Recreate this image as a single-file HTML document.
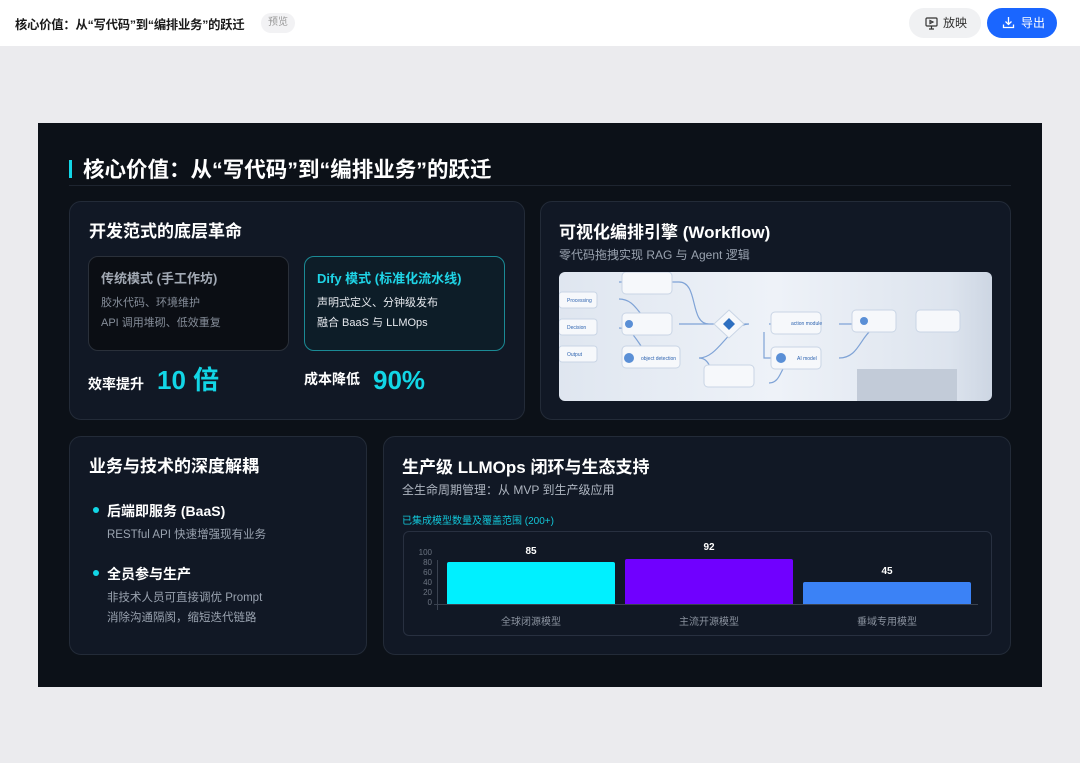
<!DOCTYPE html>
<html><head><meta charset="utf-8"><style>
*{margin:0;padding:0;box-sizing:border-box}
body{width:1080px;height:763px;background:#ebebee;font-family:"Liberation Sans","Noto Sans CJK SC",sans-serif;position:relative;overflow:hidden}
.hdr{position:absolute;left:0;top:0;width:1080px;height:46px;background:#fff}
.a{position:absolute}
.slide{position:absolute;left:38px;top:123px;width:1004px;height:564px;background:#0c1118;overflow:hidden}
.card{position:absolute;background:#111825;border:1px solid #232b38;border-radius:12px}
.t{color:#fff;font-weight:bold}
.g{color:#9aa3b0}
.row{position:absolute;display:flex;align-items:baseline;white-space:nowrap}
</style></head><body>
<div class="hdr">
 <div class="a" style="left:15px;top:15px;font-size:12.3px;font-weight:bold;color:#1a1a1a;letter-spacing:-0.2px">核心价值：从“写代码”到“编排业务”的跃迁</div>
 <div class="a" style="left:261px;top:13px;width:34px;height:20px;border-radius:10px;background:#f2f2f4;color:#999;font-size:10px;text-align:center;line-height:20px">预览</div>
 <div class="a" style="left:909px;top:8px;width:72px;height:30px;border-radius:15px;background:#f0f1f3;font-size:12px;color:#333;line-height:30px;padding-left:34px">放映
  <svg class="a" style="left:16px;top:9px" width="13" height="13" viewBox="0 0 13 13" fill="none" stroke="#333" stroke-width="1.2"><rect x="1" y="1" width="11" height="8" rx="1"/><path d="M5 3.5l3 1.5-3 1.5z M4 12h5 M6.5 9v3"/></svg></div>
 <div class="a" style="left:987px;top:8px;width:70px;height:30px;border-radius:15px;background:#1a66ff;font-size:12px;color:#fff;line-height:30px;padding-left:34px">导出
  <svg class="a" style="left:15px;top:8px" width="13" height="13" viewBox="0 0 13 13" fill="none" stroke="#fff" stroke-width="1.3"><path d="M6.5 1v7 M3.5 5.5l3 3 3-3 M1.5 8.5v3h10v-3"/></svg></div>
</div>
<div class="slide">
 <div class="a" style="left:31px;top:37px;width:3px;height:18px;background:#12d6e6"></div>
 <div class="a t" style="left:45px;top:30px;font-size:21.5px">核心价值：从“写代码”到“编排业务”的跃迁</div>
 <div class="a" style="left:31px;top:62px;width:942px;height:1px;background:#1e2530"></div>

 <div class="card" style="left:31px;top:78px;width:456px;height:219px">
  <div class="a t" style="left:19px;top:15px;font-size:17px">开发范式的底层革命</div>
  <div class="a" style="left:18px;top:54px;width:201px;height:95px;border:1px solid #2a303a;border-radius:10px;background:#0b0e14">
   <div class="a" style="left:12px;top:11px;font-size:13px;font-weight:bold;color:#a3aab5">传统模式 (手工作坊)</div>
   <div class="a g" style="left:12px;top:36px;font-size:11px;line-height:20px;color:#868e9a">胶水代码、环境维护<br>API 调用堆砌、低效重复</div>
  </div>
  <div class="a" style="left:234px;top:54px;width:201px;height:95px;border:1px solid #1b8a95;border-radius:10px;background:#0d1d28">
   <div class="a" style="left:12px;top:11px;font-size:13px;font-weight:bold;color:#1fd4e6">Dify 模式 (标准化流水线)</div>
   <div class="a" style="left:12px;top:36px;font-size:11px;line-height:20px;color:#e6e9ee">声明式定义、分钟级发布<br>融合 BaaS 与 LLMOps</div>
  </div>
  <div class="row" style="left:18px;top:158px"><span class="t" style="font-size:14px;margin-right:13px">效率提升</span><span style="font-size:26px;font-weight:bold;color:#12d6e6">10 倍</span></div>
  <div class="row" style="left:234px;top:158px"><span class="t" style="font-size:14px;margin-right:13px">成本降低</span><span style="font-size:26px;font-weight:bold;color:#12d6e6;position:relative;top:5px">90%</span></div>
 </div>

 <div class="card" style="left:502px;top:78px;width:471px;height:219px">
  <div class="a t" style="left:18px;top:16px;font-size:17px">可视化编排引擎 (Workflow)</div>
  <div class="a g" style="left:18px;top:44px;font-size:12px">零代码拖拽实现 RAG 与 Agent 逻辑</div>
  <div class="a" style="left:18px;top:70px;width:433px;height:129px;border-radius:6px;background:linear-gradient(90deg,#dfe6f0,#eef2f8 50%,#dde4ee 90%,#cdd6e3);overflow:hidden">
   <svg width="433" height="129" viewBox="0 0 433 129" fill="none">
    <g stroke="#7fa3d6" stroke-width="1.2">
     <path d="M60 10h60 M60 27c20 0 20 25 40 25 M60 56c20 0 20 30 40 30 M120 52h70 M140 86c20 0 30-34 50-34 M210 52h28 M205 60v26h30 M140 86c15 0 10 25 30 25 M210 111c15 0 10-25 30-25 M280 52h50 M280 86c25 0 20-34 50-34 M380 52h15 M120 10c20 0 10 42 30 42"/>
    </g>
    <g fill="#f6f8fb" stroke="#c9d5e5">
     <rect x="0" y="20" width="38" height="16" rx="3"/><rect x="0" y="47" width="38" height="16" rx="3"/><rect x="0" y="74" width="38" height="16" rx="3"/>
     <rect x="63" y="0" width="50" height="22" rx="4"/><rect x="63" y="41" width="50" height="22" rx="4"/><rect x="63" y="74" width="58" height="22" rx="4"/>
     <rect x="145" y="93" width="50" height="22" rx="4"/><rect x="212" y="40" width="50" height="22" rx="4"/><rect x="212" y="75" width="50" height="22" rx="4"/>
     <rect x="293" y="38" width="44" height="22" rx="4"/><rect x="357" y="38" width="44" height="22" rx="4"/>
     <path d="M170 38l15 14-15 14-15-14z"/>
    </g>
    <rect x="298" y="97" width="100" height="40" fill="#c2cbd8"/>
    <path d="M164 52l6-6 6 6-6 6z" fill="#2e6fc0"/>
    <g fill="#2d63b0" font-size="5" font-family="Liberation Sans"><text x="8" y="30">Processing</text><text x="8" y="57">Decision</text><text x="8" y="84">Output</text><text x="82" y="88">object detection</text><text x="232" y="53">action module</text><text x="238" y="88">AI model</text></g>
    <g fill="#5a8fd6"><circle cx="70" cy="52" r="4"/><circle cx="70" cy="86" r="5"/><circle cx="222" cy="86" r="5"/><circle cx="305" cy="49" r="4"/></g>
   </svg>
  </div>
 </div>

 <div class="card" style="left:31px;top:313px;width:298px;height:219px">
  <div class="a t" style="left:19px;top:15px;font-size:17px">业务与技术的深度解耦</div>
  <div class="a" style="left:23px;top:70px;width:6px;height:6px;border-radius:3px;background:#12d6e6"></div>
  <div class="a t" style="left:37px;top:64px;font-size:14px">后端即服务 (BaaS)</div>
  <div class="a g" style="left:37px;top:89px;font-size:11.5px">RESTful API 快速增强现有业务</div>
  <div class="a" style="left:23px;top:133px;width:6px;height:6px;border-radius:3px;background:#12d6e6"></div>
  <div class="a t" style="left:37px;top:127px;font-size:14px">全员参与生产</div>
  <div class="a g" style="left:37px;top:151px;font-size:11.5px;line-height:20px">非技术人员可直接调优 Prompt<br>消除沟通隔阂，缩短迭代链路</div>
 </div>

 <div class="card" style="left:345px;top:313px;width:628px;height:219px">
  <div class="a t" style="left:18px;top:16px;font-size:17px">生产级 LLMOps 闭环与生态支持</div>
  <div class="a g" style="left:18px;top:44px;font-size:12px;color:#aeb5c0">全生命周期管理：从 MVP 到生产级应用</div>
  <div class="a" style="left:18px;top:75px;font-size:10px;color:#12c6d8">已集成模型数量及覆盖范围 (200+)</div>
  <div class="a" style="left:19px;top:94px;width:589px;height:105px;border:1px solid #283040;border-radius:6px">
   <div class="a" style="left:0;top:16px;width:28px;font-size:8px;color:#6b7380;text-align:right;line-height:10px">100<br>80<br>60<br>40<br>20<br>0</div>
   <div class="a" style="left:33px;top:28px;width:1px;height:50px;background:#3a4250"></div>
   <div class="a" style="left:30px;top:72px;width:544px;height:1px;background:#3a4250"></div>
   <div class="a" style="left:43px;top:30px;width:168px;height:42px;background:#00f0ff;border-radius:2px 2px 0 0"></div>
   <div class="a" style="left:221px;top:27px;width:168px;height:45px;background:#7000ff;border-radius:2px 2px 0 0"></div>
   <div class="a" style="left:399px;top:50px;width:168px;height:22px;background:#3b82f6;border-radius:2px 2px 0 0"></div>
   <div class="a t" style="left:43px;top:14px;width:168px;text-align:center;font-size:10px">85</div>
   <div class="a t" style="left:221px;top:10px;width:168px;text-align:center;font-size:10px">92</div>
   <div class="a t" style="left:399px;top:34px;width:168px;text-align:center;font-size:10px">45</div>
   <div class="a" style="left:43px;top:81px;width:168px;text-align:center;font-size:10px;color:#8a929e">全球闭源模型</div>
   <div class="a" style="left:221px;top:81px;width:168px;text-align:center;font-size:10px;color:#8a929e">主流开源模型</div>
   <div class="a" style="left:399px;top:81px;width:168px;text-align:center;font-size:10px;color:#8a929e">垂域专用模型</div>
  </div>
 </div>
</div>
</body></html>
